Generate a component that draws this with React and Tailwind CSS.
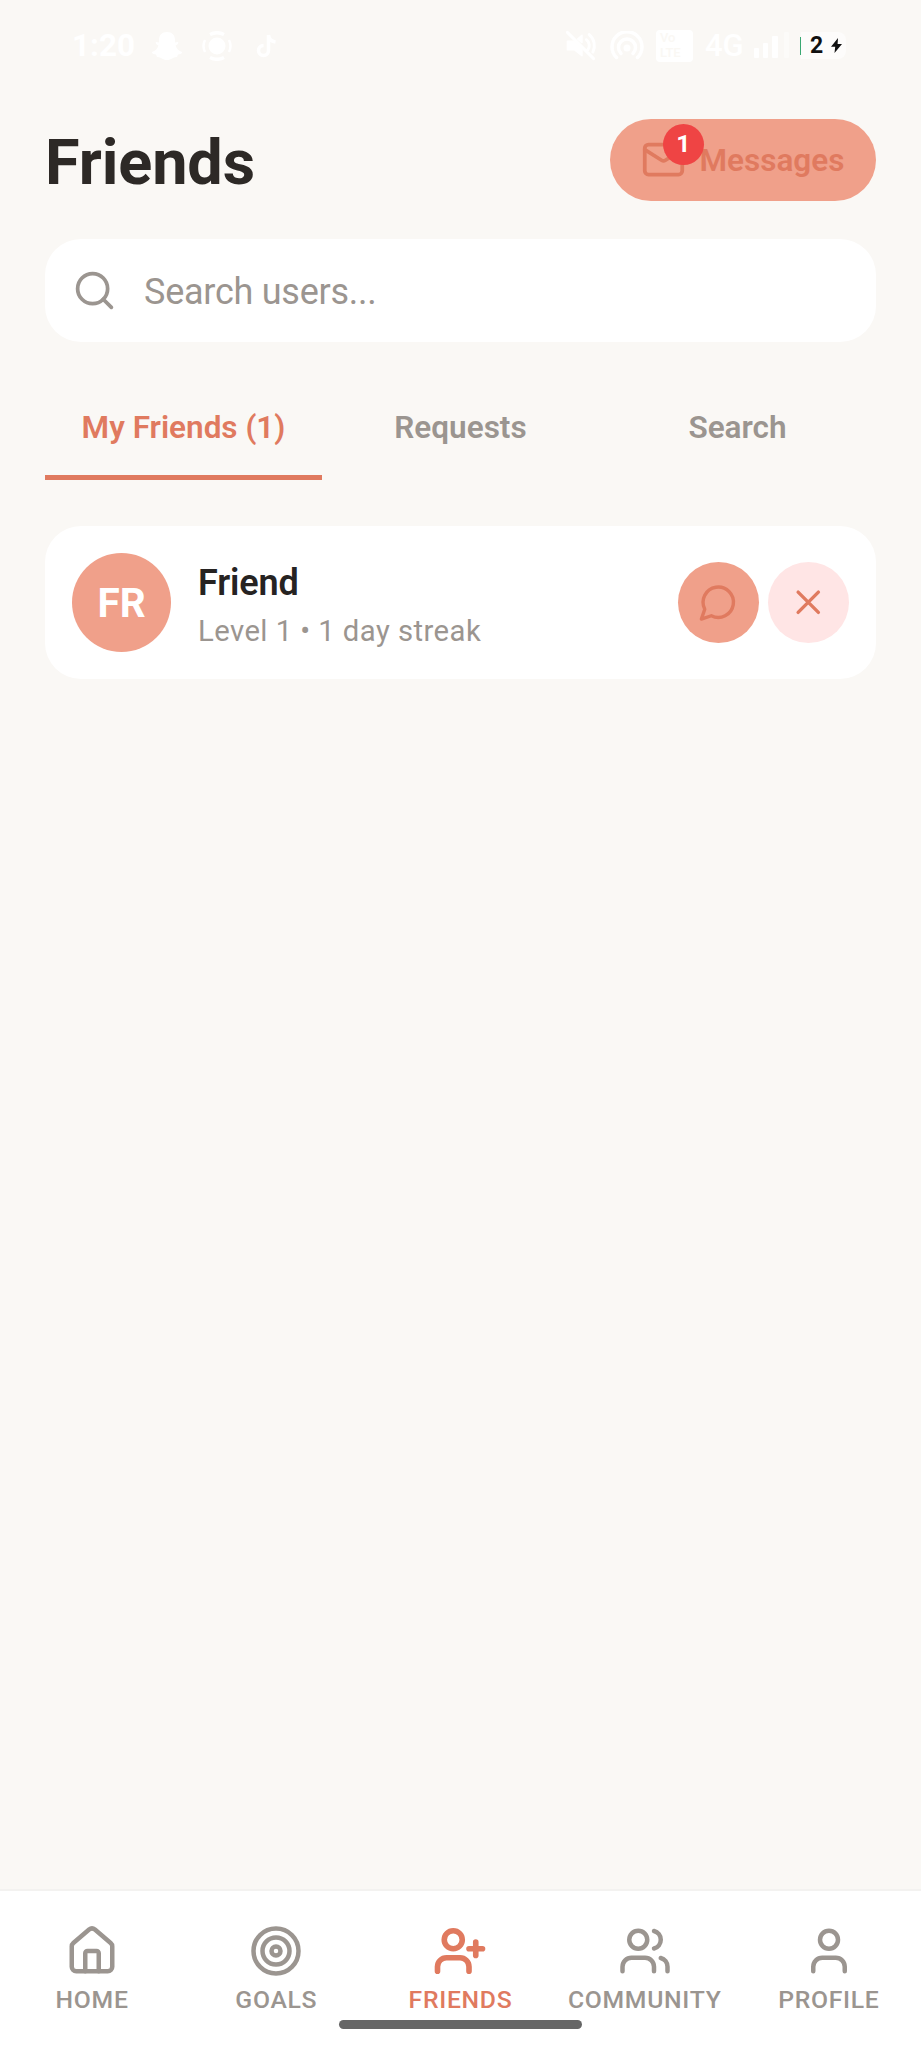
import React, { useState } from 'react';

const Icon = ({ children, className, strokeWidth = 2 }) => (
  <svg
    viewBox="0 0 24 24"
    fill="none"
    stroke="currentColor"
    strokeWidth={strokeWidth}
    strokeLinecap="round"
    strokeLinejoin="round"
    className={className}
  >
    {children}
  </svg>
);

const icons = {
  home: (
    <>
      <path d="M15 21v-8a1 1 0 0 0-1-1h-4a1 1 0 0 0-1 1v8" />
      <path d="M3 10a2 2 0 0 1 .709-1.528l7-5.999a2 2 0 0 1 2.582 0l7 5.999A2 2 0 0 1 21 10v9a2 2 0 0 1-2 2H5a2 2 0 0 1-2-2z" />
    </>
  ),
  goals: (
    <>
      <circle cx="12" cy="12" r="10" />
      <circle cx="12" cy="12" r="6" />
      <circle cx="12" cy="12" r="2" />
    </>
  ),
  friends: (
    <>
      <path d="M16 21v-2a4 4 0 0 0-4-4H6a4 4 0 0 0-4 4v2" />
      <circle cx="9" cy="7" r="4" />
      <path d="M19 8v6M22 11h-6" />
    </>
  ),
  community: (
    <>
      <path d="M16 21v-2a4 4 0 0 0-4-4H6a4 4 0 0 0-4 4v2" />
      <circle cx="9" cy="7" r="4" />
      <path d="M22 21v-2a4 4 0 0 0-3-3.87M16 3.13a4 4 0 0 1 0 7.75" />
    </>
  ),
  profile: (
    <>
      <path d="M19 21v-2a4 4 0 0 0-4-4H9a4 4 0 0 0-4 4v2" />
      <circle cx="12" cy="7" r="4" />
    </>
  ),
};

const navItems = ['home', 'goals', 'friends', 'community', 'profile'];

const StatusBar = () => (
  <div className="flex h-[90px] items-center justify-between pt-px pl-[72px] pr-[75px] text-white">
    <div className="flex items-center">
      <span className="w-[80px] text-[31.5px] leading-9 font-bold">1:20</span>
      {/* Snapchat */}
      <svg viewBox="0 0 30 28" className="h-[28px] w-[30px]" fill="currentColor">
        <path d="M15 0c5 0 8 3 8 8v2.500l3-.5c1 1-.5 2.500-2.500 3.500 1 3.500 3.500 5.500 6.500 6.500.5 1.500-2 2.200-4 2.500l-1 2.500c-4-.5-5 3-10 3s-6-3.500-10-3l-1-2.500c-2-.3-4.500-1-4-2.500 3-1 5.500-3 6.500-6.500C4.500 12.500 3 11 4 10l3 .5V8c0-5 3-8 8-8z" />
      </svg>
      <svg viewBox="0 0 30 30" className="ml-5 h-[30px] w-[30px]" fill="none" stroke="currentColor" strokeWidth="3.500">
        <circle cx="15" cy="15" r="8.500" fill="currentColor" stroke="none" />
        <path d="M8 3.500Q15 0 22 3.500M8 26.500Q15 30 22 26.500" />
        <path d="M3 9Q0 15 3 21M27 9Q30 15 27 21" strokeWidth="2.500" />
      </svg>
      {/* TikTok */}
      <svg viewBox="0 0 20 24" className="ml-6 h-[24px] w-[20px]" fill="none" stroke="currentColor" strokeWidth="3.500">
        <path d="M12.500 1v15.500a5 5 0 1 1-5-5M12.500 1q.5 6 7 7" />
      </svg>
    </div>

    <div className="flex items-center">
      <Icon className="h-[35px] w-[35px]" strokeWidth={2}>
        <path d="M3 3l18 18M16 8a5 5 0 0 1 1 7M18 4.500a10 10 0 0 1 2.500 12" />
        <path d="M13 5v5L10 7.500zM3 9h4l6 6v4l-5-4H3z" fill="currentColor" strokeWidth="1" />
      </Icon>
      <svg viewBox="0 0 34 30" className="ml-3 h-[30px] w-[34px]" fill="none" stroke="currentColor" strokeWidth="3.500" strokeLinecap="round">
        <path d="M6.500 26.500a15 15 0 1 1 21 0" />
        <path d="M11 22.500a8.500 8.500 0 1 1 12 0" />
        <circle cx="17" cy="17" r="3.500" fill="currentColor" stroke="none" />
      </svg>
      <div className="ml-[12px] flex h-[32px] w-[37px] flex-col rounded-[4px] bg-white pl-1 text-[13px] leading-[15px] font-medium text-[#faf8f4]">
        <span>Vo</span>
        <span>LTE</span>
      </div>
      <span className="ml-3 w-[40px] text-[31px] leading-9 font-medium">4G</span>
      <svg viewBox="0 0 38 28" className="ml-2 h-[28px] w-[38px]" fill="currentColor">
        <rect x="1" y="16" width="5" height="10" rx="1" />
        <rect x="10" y="11" width="5" height="15" rx="1" />
        <rect x="19" y="4" width="6" height="22" rx="1" />
        <rect x="31" y="0" width="5" height="26" rx="1" opacity="0.4" />
      </svg>
      {/* Battery */}
      <div className="ml-[9px] flex h-[27px] w-[46px] items-center">
        <span className="h-[18px] w-px bg-[#3aa873]" />
        <div className="flex h-full flex-1 items-center rounded-r-lg bg-white/60 pl-[9px]">
          <span className="text-[23px] leading-[26px] font-bold text-[#111]">2</span>
          <svg viewBox="0 0 11 15" className="ml-2 h-[15px] w-[11px]" fill="#111">
            <path d="M7 0 0 8.800h4.200L3.500 15 11 6H6.600z" />
          </svg>
        </div>
      </div>
    </div>
  </div>
);

const App = () => {
  const [activeTab, setActiveTab] = useState('friends');
  const [search, setSearch] = useState('');

  const tabs = [
    { id: 'friends', label: 'My Friends (1)' },
    { id: 'requests', label: 'Requests' },
    { id: 'search', label: 'Search' },
  ];

  return (
    <div className="relative flex h-[2048px] w-[921px] flex-col overflow-hidden bg-[#faf8f5] font-['Roboto',sans-serif] text-[#2d2926]">
      <StatusBar />

      {/* Header */}
      <div className="mt-[29px] flex items-center justify-between px-[45px]">
        <h1 className="pt-[6px] text-[63px] leading-[72px] font-bold tracking-[-0.1px]">Friends</h1>
        <button className="relative flex h-[81.5px] w-[266px] items-center gap-[13.5px] rounded-full bg-[#f0a08a] pl-[31px] text-[#e07a5f]">
          <Icon className="h-[45px] w-[45px] shrink-0">
            <path d="M4 4h16a2 2 0 0 1 2 2v12a2 2 0 0 1-2 2H4a2 2 0 0 1-2-2V6c0-1.100.9-2 2-2z" />
            <path d="m22 6.700-8.970 5.700a1.940 1.940 0 0 1-2.060 0L2 6.700" />
          </Icon>
          <span className="pt-[2px] text-[31.5px] leading-9 font-semibold">Messages</span>
          <span className="absolute top-[5px] left-[53px] flex h-[40.5px] w-[40.5px] items-center justify-center rounded-full bg-[#ef4444] text-[24.75px] leading-none font-bold text-white">
            1
          </span>
        </button>
      </div>

      {/* Search */}
      <div className="mx-[45px] mt-[38px] flex h-[103px] items-center gap-[27px] rounded-[36px] bg-white px-[27px]">
        <Icon className="h-[45px] w-[45px] shrink-0 text-[#9b9590]">
          <circle cx="11" cy="11" r="8" />
          <path d="m21 21-4.350-4.350" />
        </Icon>
        <input
          value={search}
          onChange={(e) => setSearch(e.target.value)}
          placeholder="Search users..."
          className="h-12 flex-1 pt-[3px] text-[36px] tracking-[-0.25px] outline-none placeholder:text-[#9b9590]"
        />
      </div>

      {/* Tabs */}
      <div className="mx-[45px] mt-[45px] grid grid-cols-3">
        {tabs.map((tab) => (
          <button
            key={tab.id}
            onClick={() => setActiveTab(tab.id)}
            className={`h-[93px] border-b-[5px] pt-[23px] pb-[29px] text-[31.5px] leading-9 font-semibold ${activeTab === tab.id ? 'border-[#e07a5f] text-[#e07a5f]' : 'border-transparent text-[#9b9590]'}`}
          >
            {tab.label}
          </button>
        ))}
      </div>

      {/* Friends List */}
      <div className="mx-[45px] mt-[46px] flex h-[153px] items-center rounded-[36px] bg-white px-[27px]">
        <div className="flex h-[99px] w-[99px] items-center justify-center rounded-full bg-[#f0a08a] pt-[3px] text-[40.5px] leading-none font-bold text-white">
          FR
        </div>
        <div className="ml-[27px] flex-1 pt-[9px]">
          <h3 className="text-[36px] leading-[48px] font-semibold tracking-[-0.1px] text-[#262322]">Friend</h3>
          <p className="text-[29.25px] leading-[48px] tracking-[0.45px] text-[#9b9590]">Level 1 • 1 day streak</p>
        </div>
        <div className="flex gap-[9px]">
          <button className="flex h-[81px] w-[81px] items-center justify-center rounded-full bg-[#f0a08a] text-[#e07a5f]">
            <Icon className="h-[40.5px] w-[40.5px]">
              <path d="M7.900 20A9 9 0 1 0 4 16.100L2 22Z" />
            </Icon>
          </button>
          <button className="flex h-[81px] w-[81px] items-center justify-center rounded-full bg-[#ffe5e5] text-[#e07a5f]">
            <Icon className="h-[40.5px] w-[40.5px]">
              <path d="M18 6 6 18M6 6l12 12" />
            </Icon>
          </button>
        </div>
      </div>

      {/* Bottom Nav */}
      <nav className="mt-auto grid h-[159px] grid-cols-5 border-t-2 border-[#f3f2f0] bg-white pt-[33px]">
        {navItems.map((name) => (
          <button
            key={name}
            className={`flex flex-col items-center gap-[7px] ${name === 'friends' ? 'text-[#e07a5f]' : 'text-[#9b9590]'}`}
          >
            <Icon className="h-[54px] w-[54px]" strokeWidth={name === 'friends' ? 2.500 : 2}>
              {icons[name]}
            </Icon>
            <span className="text-[24.75px] leading-[30px] font-medium tracking-[0.7px] uppercase">{name}</span>
          </button>
        ))}
      </nav>

      {/* Gesture bar */}
      <div className="absolute bottom-[19px] left-[339px] h-[9px] w-[243px] rounded-full bg-[#666]" />
    </div>
  );
};

export default App;
